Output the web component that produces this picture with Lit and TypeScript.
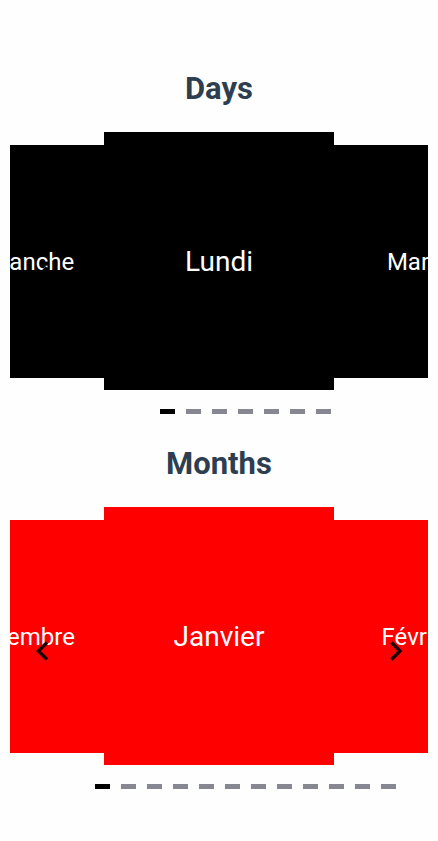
import { LitElement, html, css } from "lit";
import { customElement, property } from "lit/decorators.js";
import { classMap } from "lit/directives/class-map.js";

@customElement("slide-carousel")
class SlideCarousel extends LitElement {
  @property() heading = "";
  @property({ type: Array }) items: string[] = [];
  @property({ type: Number }) active = 0;
  @property({ reflect: true }) tone = "dark";

  static styles = css`
    :host {
      display: block;
      --slide: #000;
    }
    :host([tone="red"]) {
      --slide: #f00;
    }
    h2 {
      margin: 0 0 25px;
      font-size: 31px;
      line-height: 36px;
      font-weight: 700;
      text-align: center;
      color: #2c3e50;
    }
    .frame {
      position: relative;
      margin: 0 10px;
    }
    .track {
      display: flex;
      justify-content: center;
      align-items: center;
      overflow: hidden;
    }
    .slide {
      flex: none;
      box-sizing: border-box;
      width: 50%;
      height: 233px;
      margin: 0 -5%;
      padding-top: 2px;
      display: flex;
      align-items: center;
      justify-content: center;
      background: var(--slide);
      color: #fff;
      font-size: 24px;
      line-height: 32px;
    }
    .slide.current {
      position: relative;
      width: 55%;
      height: 258px;
      margin: 0;
      font-size: 28px;
    }
    .arrow {
      position: absolute;
      top: calc(50% - 1px);
      margin: 0;
      padding: 0;
      border: 0;
      background: none;
      color: #000;
      width: 32px;
      height: 32px;
      cursor: pointer;
    }
    :host([tone="red"]) .arrow {
      color: #1a0000;
    }
    .prev {
      left: 16px;
    }
    .next {
      right: 16px;
    }
    .arrow svg {
      display: block;
      width: 32px;
      height: 32px;
      fill: none;
      stroke: currentColor;
      stroke-width: 3.4;
    }
    .dots {
      display: flex;
      justify-content: center;
      gap: 11px;
      padding: 19px 0 0 52px;
    }
    .dot {
      width: 15px;
      height: 5px;
      padding: 0;
      border: 0;
      background: #868790;
      cursor: pointer;
    }
    .dot.on {
      background: #000;
    }
  `;

  private at(offset: number) {
    const n = this.items.length;
    return (this.active + offset + n) % n;
  }

  private go(index: number) {
    this.active = index;
  }

  render() {
    return html`
      <h2>${this.heading}</h2>
      <div class="frame">
        <div class="track">
          <div class="slide">${this.items[this.at(-1)]}</div>
          <div class="slide current">${this.items[this.active]}</div>
          <div class="slide">${this.items[this.at(1)]}</div>
        </div>
        <button class="arrow prev" aria-label="Previous" @click=${() => this.go(this.at(-1))}>
          <svg viewBox="0 0 32 32"><path d="M21 7.500 12.500 16l8.500 8.500" /></svg>
        </button>
        <button class="arrow next" aria-label="Next" @click=${() => this.go(this.at(1))}>
          <svg viewBox="0 0 32 32"><path d="M11.500 7.500 20 16l-8.500 8.500" /></svg>
        </button>
      </div>
      <div class="dots">
        ${this.items.map(
          (item, i) => html`<button
            class=${classMap({ dot: true, on: i === this.active })}
            aria-label=${item}
            @click=${() => this.go(i)}
          ></button>`
        )}
      </div>
    `;
  }
}

@customElement("app-root")
class AppRoot extends LitElement {
  static styles = css`
    :host {
      display: block;
      min-height: 100vh;
      box-sizing: border-box;
      padding: 71px 0 48px;
      background: #fefefe;
      font-family: Roboto, "Liberation Sans", sans-serif;
    }
    main {
      display: flex;
      flex-direction: column;
      gap: 32px;
    }
  `;

  private days = ["Lundi", "Mardi", "Mercredi", "Jeudi", "Vendredi", "Samedi", "Dimanche"];
  private months = [
    "Janvier", "Février", "Mars", "Avril", "Mai", "Juin",
    "Juillet", "Août", "Septembre", "Octobre", "Novembre", "Décembre",
  ];

  render() {
    return html`
      <main>
        <slide-carousel heading="Days" .items=${this.days}></slide-carousel>
        <slide-carousel heading="Months" tone="red" .items=${this.months}></slide-carousel>
      </main>
    `;
  }
}
